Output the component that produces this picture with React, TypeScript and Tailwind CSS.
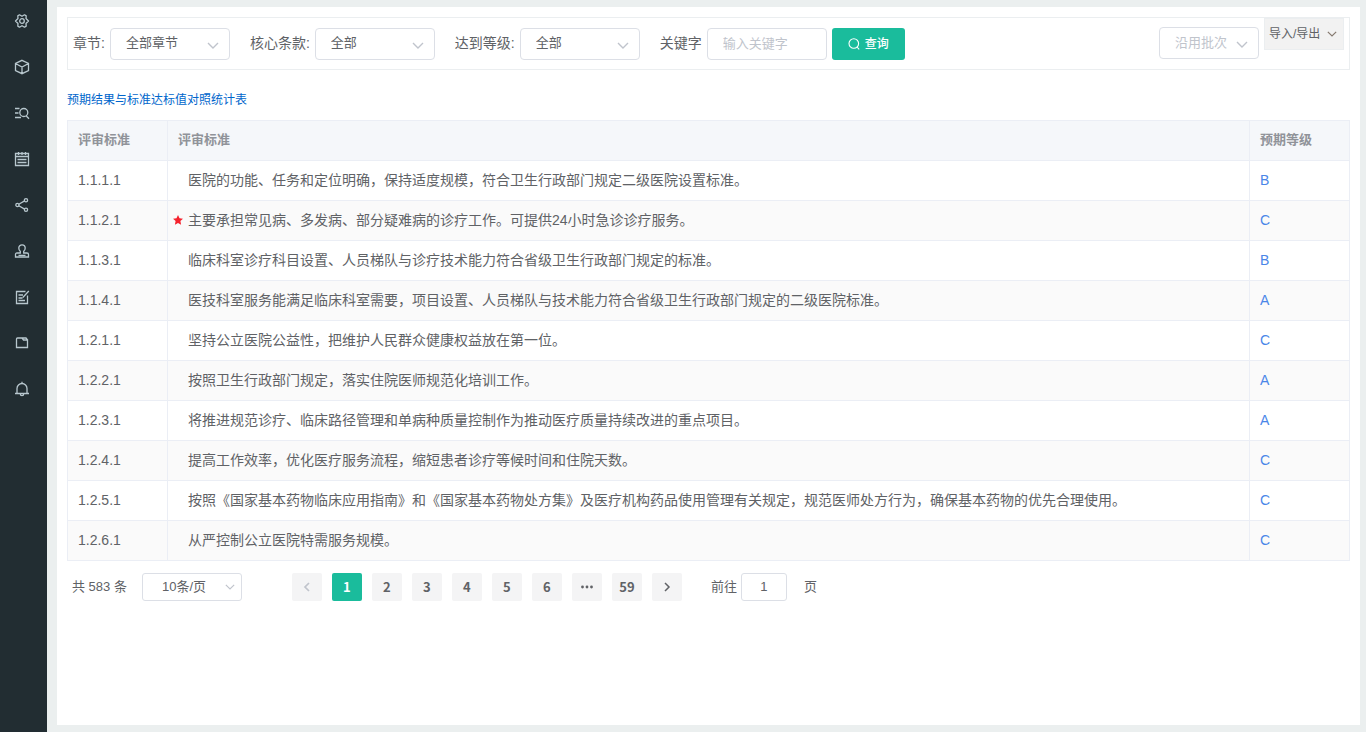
import { useState } from 'react';
import type { ReactNode } from 'react';

type Row = { code: string; text: string; grade: string; core?: boolean };

const rows: Row[] = [
  { code: '1.1.1.1', text: '医院的功能、任务和定位明确，保持适度规模，符合卫生行政部门规定二级医院设置标准。', grade: 'B' },
  { code: '1.1.2.1', text: '主要承担常见病、多发病、部分疑难病的诊疗工作。可提供24小时急诊诊疗服务。', grade: 'C', core: true },
  { code: '1.1.3.1', text: '临床科室诊疗科目设置、人员梯队与诊疗技术能力符合省级卫生行政部门规定的标准。', grade: 'B' },
  { code: '1.1.4.1', text: '医技科室服务能满足临床科室需要，项目设置、人员梯队与技术能力符合省级卫生行政部门规定的二级医院标准。', grade: 'A' },
  { code: '1.2.1.1', text: '坚持公立医院公益性，把维护人民群众健康权益放在第一位。', grade: 'C' },
  { code: '1.2.2.1', text: '按照卫生行政部门规定，落实住院医师规范化培训工作。', grade: 'A' },
  { code: '1.2.3.1', text: '将推进规范诊疗、临床路径管理和单病种质量控制作为推动医疗质量持续改进的重点项目。', grade: 'A' },
  { code: '1.2.4.1', text: '提高工作效率，优化医疗服务流程，缩短患者诊疗等候时间和住院天数。', grade: 'C' },
  { code: '1.2.5.1', text: '按照《国家基本药物临床应用指南》和《国家基本药物处方集》及医疗机构药品使用管理有关规定，规范医师处方行为，确保基本药物的优先合理使用。', grade: 'C' },
  { code: '1.2.6.1', text: '从严控制公立医院特需服务规模。', grade: 'C' },
];

const menu: { name: string; icon: ReactNode }[] = [
  {
    name: '系统设置',
    icon: (
      <>
        <path d="M5.500 1.800L8 3.300l2.500-1.500 1.700 1.100-.2 2.600L14.500 8 12 10.500l.2 2.600-1.700 1.100L8 12.700l-2.500 1.500-1.700-1.100.2-2.600L1.500 8 4 5.500l-.2-2.600z" strokeLinejoin="round" />
        <circle cx="8" cy="8" r="2.300" />
      </>
    ),
  },
  { name: '标准管理', icon: <path d="M8 1.300l6.500 3.200v7L8 14.700l-6.500-3.200v-7zM1.500 4.500L8 8l6.500-3.500M8 8v6.500" /> },
  {
    name: '查询',
    icon: (
      <>
        <path d="M1 3.500h4.500M1 8h3.500M1 12.500h6M12.300 11l2.700 2.700" />
        <circle cx="9.800" cy="7.500" r="4" />
      </>
    ),
  },
  { name: '任务', icon: <path d="M1.500 2.500h13v12h-13zM1.500 5.500h13M3.500 8.500h9M3.500 11.500h9M4.500 1v3M8 1v3M11.500 1v3" /> },
  {
    name: '分享',
    icon: (
      <>
        <path d="M4.800 7.200l5.800-3.300M4.800 8.800l5.800 3.300" />
        <circle cx="3.400" cy="8" r="1.600" />
        <circle cx="12" cy="3.200" r="1.600" />
        <circle cx="12" cy="12.800" r="1.600" />
      </>
    ),
  },
  {
    name: '审核',
    icon: <path d="M6.300 10V8.300C5.200 7.500 4.800 6.300 4.800 5a3.200 3.200 0 0 1 6.400 0c0 1.300-.4 2.500-1.500 3.300V10h3.300q1.500 0 1.500 1.500v2.500h-13v-2.500Q1.500 10 3 10zM4.500 12.300h7" />,
  },
  { name: '自评', icon: <path d="M13.500 6.500v8h-11v-12h9M4.500 6h4.500M4.500 9h4M4.500 11.500h6.500M8.800 8.500l6-6.500" /> },
  { name: '文件', icon: <path d="M3.500 3H8l1.500 2h4v7.500h-11V4q0-1 1-1zM8.500 3H12l1.500 2" /> },
  { name: '消息', icon: <path d="M1 12.500h14M3 12.500V7.500a5 5 0 0 1 10 0v5M8 .8v1.700M6.300 13a1.700 1.700 0 0 0 3.400 0" /> },
];

function Chevron({ className }: { className: string }) {
  return (
    <svg className={className} viewBox="0 0 12 7" fill="none" stroke="currentColor" strokeWidth="1.400" aria-hidden="true">
      <path d="M1 .9L6 5.900 11 .9" />
    </svg>
  );
}

function Picker({ id, options, label, className }: { id: string; options: string[]; label?: string; className: string }) {
  return (
    <div className="relative">
      <select
        id={id}
        aria-label={label}
        className={`block appearance-none rounded border border-[#dcdfe6] bg-white pl-[15px] pr-7 text-[13px] outline-none ${className}`}
      >
        {options.map((o) => (
          <option key={o}>{o}</option>
        ))}
      </select>
      <Chevron className="pointer-events-none absolute right-[11px] top-3.5 h-[7px] w-3 text-[#c0c4cc]" />
    </div>
  );
}

const pageButton = 'flex h-7 w-[30px] items-center justify-center rounded-[2px]';

export default function App() {
  const [page, setPage] = useState('1');

  return (
    <div className="flex min-h-screen bg-[#ebefef] font-['Liberation_Sans','Noto_Sans_CJK_SC',sans-serif] text-sm text-[#606266]">
      <nav className="w-[47px] shrink-0 bg-[#222d32]" aria-label="主菜单">
        <ul className="-mt-0.5">
          {menu.map((m) => (
            <li key={m.name}>
              <a href="#" aria-label={m.name} className="flex h-[46px] items-center pl-3.5 text-[#b8c7ce]">
                <svg className="size-4" viewBox="0 0 16 16" fill="none" stroke="currentColor" strokeWidth="1.300" aria-hidden="true">
                  {m.icon}
                </svg>
              </a>
            </li>
          ))}
        </ul>
      </nav>

      <main className="flex min-w-0 grow flex-col pb-[7px] pl-2.5 pr-1.5 pt-[7px]">
        <div className="grow bg-white p-2.5">
          <form className="flex items-start justify-between border border-[#ebeef0] pb-[9px] pl-[5px] pr-[5px]" onSubmit={(e) => e.preventDefault()}>
            <div className="flex items-center gap-5 pt-2.5">
              <div className="flex items-center gap-[5px]">
                <label htmlFor="chapter" className="pb-0.5">章节:</label>
                <Picker id="chapter" options={['全部章节']} className="h-8 w-[120px] pb-0.5" />
              </div>
              <div className="flex items-center gap-[5px]">
                <label htmlFor="core" className="pb-0.5">核心条款:</label>
                <Picker id="core" options={['全部']} className="h-8 w-[120px] pb-0.5" />
              </div>
              <div className="flex items-center gap-[5px]">
                <label htmlFor="level" className="pb-0.5">达到等级:</label>
                <Picker id="level" options={['全部']} className="h-8 w-[120px] pb-0.5" />
              </div>
              <div className="flex items-center gap-[5px]">
                <label htmlFor="keyword" className="pb-0.5">关键字</label>
                <input
                  id="keyword"
                  placeholder="输入关键字"
                  className="h-8 w-[120px] rounded border border-[#dcdfe6] px-[15px] pb-0.5 text-[13px] outline-none placeholder:text-[#c0c4cc]"
                />
                <button className="flex h-8 items-center gap-[5px] rounded-[3px] bg-[#1abc9c] px-4 text-xs font-medium text-white">
                  <svg className="size-3" viewBox="0 0 12 12" fill="none" stroke="currentColor" strokeWidth="1.100" aria-hidden="true">
                    <circle cx="5.800" cy="5.500" r="4.800" />
                    <path d="M9 9l2.200 2.400" />
                  </svg>
                  查询
                </button>
              </div>
            </div>
            <div className="flex items-start gap-[5px]">
              <div className="pt-[9px]">
                <Picker id="batch" label="沿用批次" options={['沿用批次']} className="h-8 w-[100px] text-[#c0c4cc]" />
              </div>
              <button type="button" className="flex h-8 w-20 items-center gap-[7px] border border-[#ebeef0] bg-[#f2f2f2] pl-1 text-xs">
                导入/导出
                <Chevron className="h-1.5 w-2.5 text-[#85796f]" />
              </button>
            </div>
          </form>

          <a href="#" className="mt-5 block w-fit text-xs leading-5 text-[#0066cc]">
            预期结果与标准达标值对照统计表
          </a>

          <table className="mt-2.5 w-full table-fixed border-collapse text-left">
            <thead>
              <tr className="h-10 bg-[#f5f7fa] text-[13px] text-[#909399]">
                <th className="w-[100px] border border-[#ebeef5] px-2.5 py-0 font-bold">评审标准</th>
                <th className="border border-[#ebeef5] px-2.5 py-0 font-bold">评审标准</th>
                <th className="w-[100px] border border-[#ebeef5] px-2.5 py-0 font-bold">预期等级</th>
              </tr>
            </thead>
            <tbody>
              {rows.map((r) => (
                <tr key={r.code} className="h-10 even:bg-[#fafafa]">
                  <td className="border border-[#ebeef5] px-2.5 pb-0.5 pt-0">{r.code}</td>
                  <td className="border border-[#ebeef5] px-[5px] pb-0.5 pt-0">
                    <div className="flex items-center gap-[5px]">
                      <span className="size-2.5 shrink-0">
                        {r.core && (
                          <svg className="size-2.5" viewBox="0 0 10 10" fill="#f5222d" aria-label="核心条款">
                            <path d="M5 0l1.500 3.300 3.500.4-2.600 2.400.7 3.600L5 7.900 1.900 9.700l.7-3.600L0 3.700l3.500-.4z" />
                          </svg>
                        )}
                      </span>
                      <span>{r.text}</span>
                    </div>
                  </td>
                  <td className="border border-[#ebeef5] px-2.5 pb-0.5 pt-0">
                    <a href="#" className="text-[#4a86e8]">{r.grade}</a>
                  </td>
                </tr>
              ))}
            </tbody>
          </table>

          <div className="mt-3 flex items-center pl-[5px] text-[13px]">
            <span>共 583 条</span>
            <div className="relative ml-[15px]">
              <select aria-label="每页条数" className="block h-7 w-[100px] appearance-none rounded-[3px] border border-[#dcdfe6] bg-white pl-[19px] text-[13px] outline-none">
                <option>10条/页</option>
              </select>
              <Chevron className="pointer-events-none absolute right-[7px] top-[11px] h-1.5 w-2.5 text-[#c0c4cc]" />
            </div>
            <div className="ml-[50px] flex gap-2.5 font-['Noto_Sans_CJK_SC',sans-serif] font-bold">
              <button aria-label="上一页" disabled className={`${pageButton} bg-[#f4f4f5] text-[#c0c4cc]`}>
                <svg className="h-2.5 w-2" viewBox="0 0 8 10" fill="none" stroke="currentColor" strokeWidth="1.700" aria-hidden="true">
                  <path d="M6 1L2 5l4 4" />
                </svg>
              </button>
              <button className={`${pageButton} bg-[#1abc9c] text-white`}>1</button>
              {['2', '3', '4', '5', '6'].map((n) => (
                <button key={n} className={`${pageButton} bg-[#f4f4f5]`}>{n}</button>
              ))}
              <button aria-label="向后5页" className={`${pageButton} bg-[#f4f4f5]`}>
                <svg className="h-1 w-3" viewBox="0 0 12 4" fill="currentColor" aria-hidden="true">
                  <circle cx="1.500" cy="2" r="1.400" />
                  <circle cx="6" cy="2" r="1.400" />
                  <circle cx="10.500" cy="2" r="1.400" />
                </svg>
              </button>
              <button className={`${pageButton} bg-[#f4f4f5]`}>59</button>
              <button aria-label="下一页" className={`${pageButton} bg-[#f4f4f5]`}>
                <svg className="h-2.5 w-2" viewBox="0 0 8 10" fill="none" stroke="currentColor" strokeWidth="1.500" aria-hidden="true">
                  <path d="M2 1l4 4-4 4" />
                </svg>
              </button>
            </div>
            <label htmlFor="goto" className="ml-[29px]">前往</label>
            <input
              id="goto"
              value={page}
              onChange={(e) => setPage(e.target.value)}
              className="ml-1 h-7 w-[46px] rounded-[3px] border border-[#dcdfe6] pb-0.5 text-center text-[13px] outline-none"
            />
            <span className="ml-[17px]">页</span>
          </div>
        </div>
      </main>
    </div>
  );
}
